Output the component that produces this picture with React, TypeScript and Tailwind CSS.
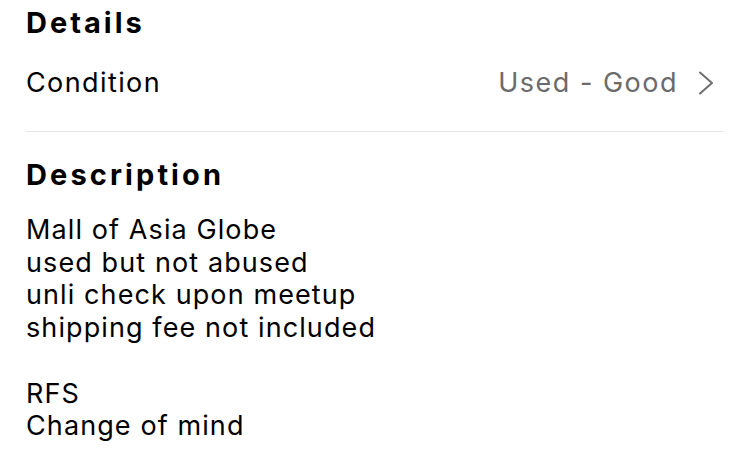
import React from "react";

const description = `Mall of Asia Globe
used but not abused
unli check upon meetup
shipping fee not included

RFS
Change of mind`;

const ChevronRight = () => (
  <svg width="16" height="24" viewBox="0 0 16 24" fill="none" className="ml-[20px]">
    <path d="M2 1.5 L14 12 L2 22.5" stroke="#6e6e6e" strokeWidth="2" strokeLinecap="round" strokeLinejoin="round" />
  </svg>
);

const App: React.FC = () => {
  return (
    <div
      className="w-[750px] h-[450px] overflow-hidden bg-white text-black"
      style={{ fontFamily: "Inter, 'Liberation Sans', sans-serif" }}
    >
      <div className="pl-[26px] pr-[27px]">
        <h2 className="text-[29px] leading-[36px] font-bold tracking-[3px] pt-[5px]">Details</h2>
        <div className="flex items-center justify-between h-[61px] mt-[11px] pr-[9px]">
          <span className="text-[27px] leading-[32px] tracking-[1.4px]">Condition</span>
          <div className="flex items-center">
            <span className="text-[27px] leading-[32px] tracking-[1.5px] text-[#6b6b6b]">Used - Good</span>
            <ChevronRight />
          </div>
        </div>
        <div className="border-t border-[#e4e4e4] mt-[18px]" />
        <h2 className="text-[29px] leading-[36px] font-bold tracking-[3.1px] mt-[25px]">Description</h2>
        <p className="text-[27px] leading-[32.7px] tracking-[1.1px] whitespace-pre-line mt-[21px]">{description}</p>
      </div>
    </div>
  );
};

export default App;
